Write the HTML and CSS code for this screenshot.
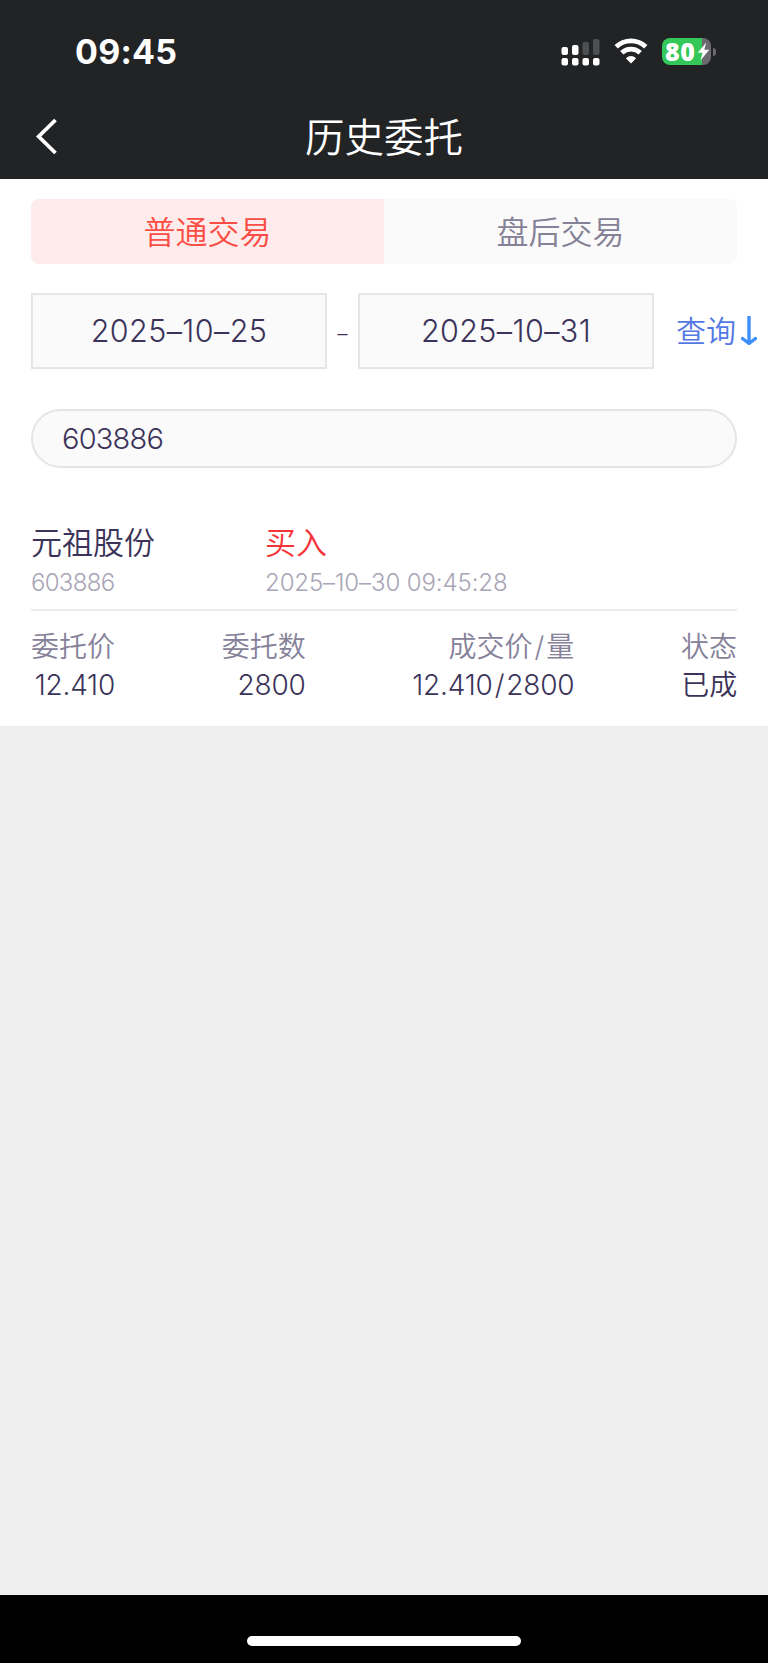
FILE: index.html
```html
<!DOCTYPE html>
<html lang="zh-CN">
<head>
	<meta charset="utf-8">
	<title>历史委托</title>
	<link rel="stylesheet" href="styles.css">
</head>
<body>
	<div class="top">
		<div class="status">
			<span class="time">09:45</span>
			<div class="status-icons">
				<svg class="signal" width="40" height="28" viewBox="0 0 40 28">
					<g fill="#fff">
						<rect x="1.5" y="9" width="6.5" height="8" rx="2"/>
						<rect x="12" y="7" width="6.5" height="10" rx="2"/>
						<rect x="1.5" y="20" width="6.5" height="7.5" rx="2"/>
						<rect x="12" y="20" width="6.5" height="7.5" rx="2"/>
						<rect x="22.5" y="20" width="6.5" height="7.5" rx="2"/>
						<rect x="33" y="20" width="6.5" height="7.5" rx="2"/>
					</g>
					<g fill="#4e4f50">
						<rect x="22.5" y="4" width="6.5" height="13" rx="2"/>
						<rect x="33" y="1" width="6.5" height="16" rx="2"/>
					</g>
				</svg>
				<svg class="wifi" width="34" height="26" viewBox="0 0 34 26">
					<g fill="none" stroke="#fff" stroke-width="4.8">
						<path d="M2.2 8.7A21.5 21.5 0 0 1 31.8 8.7"/>
						<path d="M7.8 14.7A13.4 13.4 0 0 1 26.2 14.7"/>
					</g>
					<path d="M17 25.5L11.8 20.2Q17 15.8 22.2 20.2Z" fill="#fff"/>
				</svg>
				<div class="battery">
					<span>80</span>
					<svg width="13" height="19" viewBox="0 0 12 19"><path d="M8.7 0.5L0.3 10.8H5L3 18.5L11.7 7.7H6.8Z" fill="#fff"/></svg>
				</div>
				<i class="battery-cap"></i>
			</div>
		</div>
		<div class="nav">
			<svg class="back" width="24" height="40" viewBox="0 0 24 40"><path d="M20.5 3L3.7 19.5L20.5 36" fill="none" stroke="#fff" stroke-width="3.8"/></svg>
			<h1>历史委托</h1>
		</div>
	</div>

	<div class="main">
		<div class="tabs">
			<a class="tab active">普通交易</a>
			<a class="tab">盘后交易</a>
		</div>
		<div class="dates">
			<div class="date">2025–10–25</div>
			<span class="to">–</span>
			<div class="date">2025–10–31</div>
			<a class="query">查询</a>
			<svg class="arrow" width="16" height="30" viewBox="0 0 16 30"><path d="M8 1V27M1.5 22.5L8 27.5L14.5 22.5" fill="none" stroke="#3f8ffb" stroke-width="3.4" stroke-linecap="round" stroke-linejoin="round"/></svg>
		</div>
		<div class="search">603886</div>

		<div class="order">
			<div class="order-head">
				<div class="stock">
					<p class="name">元祖股份</p>
					<p class="sub code">603886</p>
				</div>
				<div>
					<p class="name buy">买入</p>
					<p class="sub">2025–10–30 09:45:28</p>
				</div>
			</div>
			<div class="order-data">
				<div class="col"><p>委托价</p><b>12.410</b></div>
				<div class="col"><p>委托数</p><b>2800</b></div>
				<div class="col"><p>成交价<i>/</i>量</p><b>12.410<i>/</i>2800</b></div>
				<div class="col"><p>状态</p><b>已成</b></div>
			</div>
		</div>
	</div>

	<div class="bottom"><i></i></div>
</body>
</html>
```
FILE: styles.css
```css
*{ margin: 0; padding: 0; box-sizing: border-box; }

body{
	display: flex;
	flex-direction: column;
	height: 1663px;
	background: #efefef;
	color: #3b3359;
	font-family: Inter, "Noto Sans CJK SC", sans-serif;
	font-weight: 350;
}
svg{ display: block; flex: none; }
i{ font-style: normal; }

/* 顶部 */
.top{ height: 179px; background: #222325; color: #fff; }
.status{ display: flex; justify-content: space-between; height: 96px; padding: 31px 52px 0 75px; }
.time{ font-size: 34px; font-weight: 700; line-height: 41px; letter-spacing: 0.2px; }
.status-icons{ display: flex; height: 41px; align-items: center; }
.wifi{ margin: -1px 14px 0 14px; }
.battery{
	display: flex;
	align-items: center;
	width: 49px;
	height: 27px;
	padding-left: 3px;
	border-radius: 8px;
	background: linear-gradient(to right, #34c759 40px, #6a6a6e 40px);
}
.battery span{ width: 32px; margin-top: -2px; font-family: "Open Sans", sans-serif; font-size: 25px; font-weight: 800; line-height: 26px; letter-spacing: 0.6px; }
.battery-cap{ width: 3px; height: 8px; margin-left: 2px; border-radius: 0 4px 4px 0; background: #6a6a6e; }
.nav{ display: flex; align-items: center; height: 82px; padding: 0 35px; }
.nav h1{ flex: 1; padding: 2px 24px 0 0; text-align: center; font-size: 39.5px; font-weight: 350; line-height: 60px; }

/* 查询条件 */
.main{ height: 547px; padding: 20px 31px 0; background: #fff; }
.tabs{ display: flex; height: 65px; border-radius: 8px; overflow: hidden; background: #fafafa; }
.tab{ flex: 1; text-align: center; font-size: 32px; line-height: 67px; color: #858196; }
.tab.active{ background: #feecec; color: #fa4d45; }
.dates{ display: flex; align-items: center; height: 76px; margin: 29px -22px 0 0; }
.date{ flex: none; width: 296px; height: 76px; border: 2px solid #e5e5e5; background: #fafafa; text-align: center; font-size: 30.5px; line-height: 72px; letter-spacing: 0.4px; }
.to{ width: 31px; padding-top: 6px; text-align: center; font-size: 20px; }
.query{ margin-left: 22px; font-size: 30px; line-height: 74px; color: #5478e4; }
.arrow{ margin-left: 5px; }
.search{ height: 59px; margin-top: 40px; padding-left: 29px; border: 2px solid #e5e5e5; border-radius: 30px; background: #fafafa; font-size: 29px; line-height: 56px; letter-spacing: -0.8px; }

/* 委托记录 */
.order-head{ display: flex; height: 91px; margin-top: 52px; border-bottom: 2px solid #ececee; }
.stock{ width: 234px; }
.name{ font-size: 31px; line-height: 46px; }
.buy{ color: #f5333a; }
.sub{ font-size: 24px; line-height: 34px; letter-spacing: -0.1px; color: #a8a5b6; }
.code{ letter-spacing: -0.7px; }
.order-data{ display: flex; justify-content: space-between; padding-top: 18px; text-align: right; }
.col{ font-size: 28px; }
.col p{ line-height: 37px; color: #858199; }
.col b{ display: block; font-size: 28px; font-weight: 350; line-height: 38px; letter-spacing: -0.2px; }
.col i{ padding: 0 2px; }

/* 底部横条 */
.bottom{ height: 68px; margin-top: auto; padding-top: 41px; background: #000; }
.bottom i{ display: block; width: 274px; height: 10px; margin: 0 auto; border-radius: 5px; background: #fff; }
```
